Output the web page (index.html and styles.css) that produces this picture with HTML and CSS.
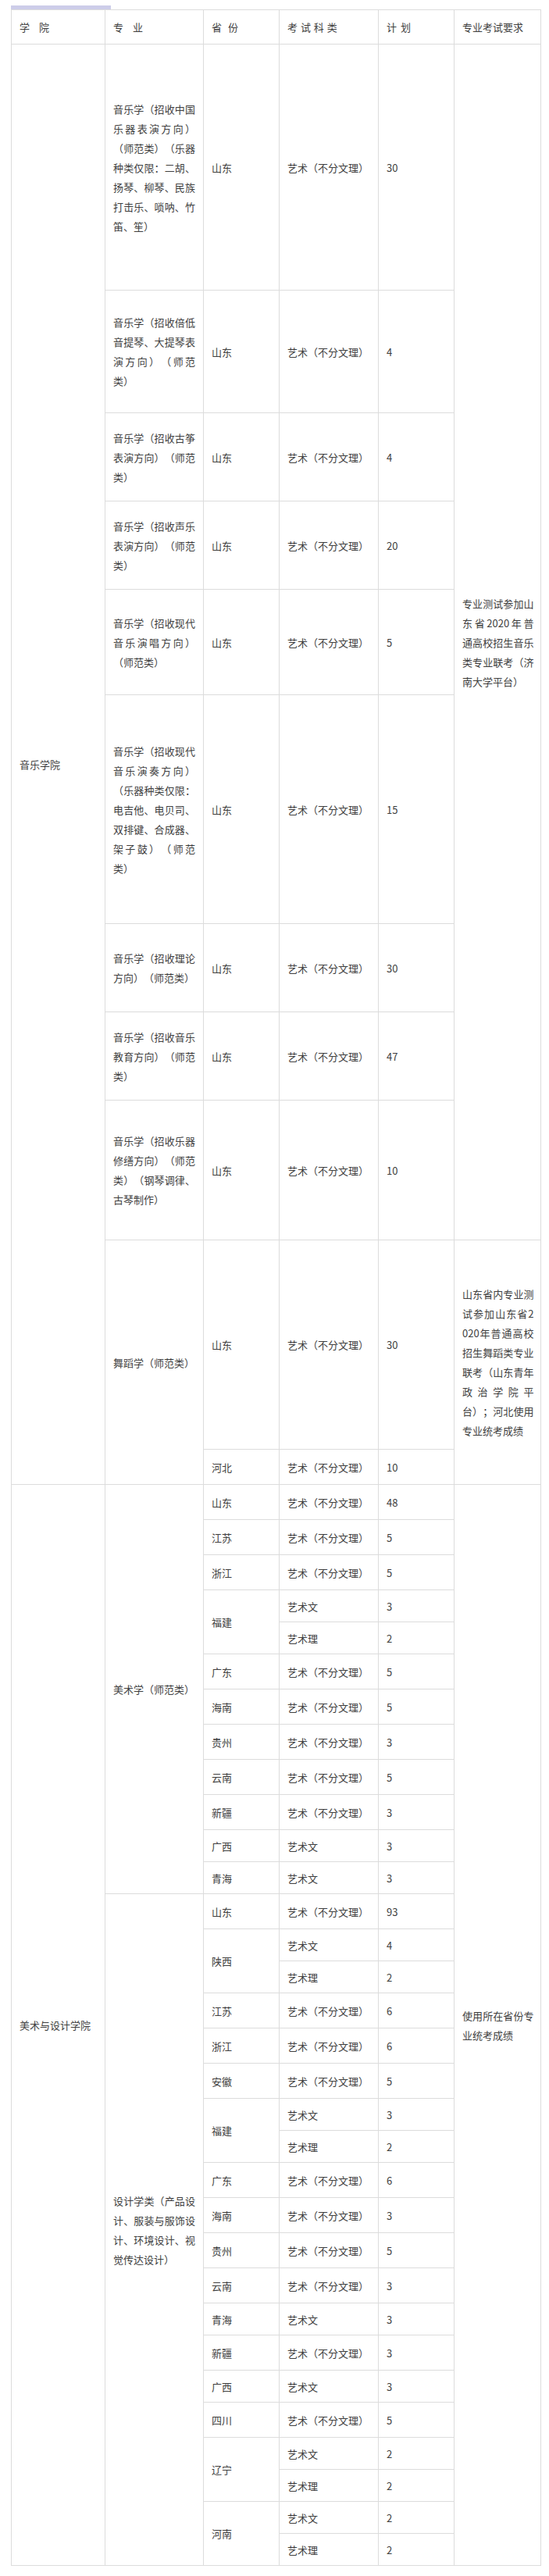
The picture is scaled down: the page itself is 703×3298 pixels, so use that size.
FILE: index.html
```html
<!DOCTYPE html>
<html lang="zh-CN">
<head>
<meta charset="utf-8">
<title>招生计划</title>
<link rel="stylesheet" href="styles.css">
</head>
<body>
<div class="page">
  <div class="bar"></div>
  <table class="plan">
    <colgroup>
      <col class="c-college">
      <col class="c-major">
      <col class="c-prov">
      <col class="c-type">
      <col class="c-num">
      <col class="c-req">
    </colgroup>
    <thead>
      <tr class="h-head">
        <th class="ws-9">学 院</th>
        <th class="ws-9">专 业</th>
        <th class="ws-5">省 份</th>
        <th class="ws-1">考 试 科 类</th>
        <th class="ws-2">计 划</th>
        <th>专业考试要求</th>
      </tr>
    </thead>
    <tbody>
      <tr class="h-315">
        <td rowspan="11">音乐学院</td>
        <td class="major">音乐学（招收中国乐器表演方向）（师范类）（乐器种类仅限：二胡、扬琴、柳琴、民族打击乐、唢呐、竹笛、笙）</td>
        <td>山东</td><td>艺术（不分文理）</td><td>30</td>
        <td class="req" rowspan="9">专业测试参加山东省2020年普通高校招生音乐类专业联考（济南大学平台）</td>
      </tr>
      <tr class="h-157">
        <td class="major">音乐学（招收倍低音提琴、大提琴表演方向）（师范类）</td>
        <td>山东</td><td>艺术（不分文理）</td><td>4</td>
      </tr>
      <tr class="h-113">
        <td class="major">音乐学（招收古筝表演方向）（师范类）</td>
        <td>山东</td><td>艺术（不分文理）</td><td>4</td>
      </tr>
      <tr class="h-113">
        <td class="major">音乐学（招收声乐表演方向）（师范类）</td>
        <td>山东</td><td>艺术（不分文理）</td><td>20</td>
      </tr>
      <tr class="h-135">
        <td class="major">音乐学（招收现代音乐演唱方向）（师范类）</td>
        <td>山东</td><td>艺术（不分文理）</td><td>5</td>
      </tr>
      <tr class="h-293">
        <td class="major">音乐学（招收现代音乐演奏方向）（乐器种类仅限：电吉他、电贝司、双排键、合成器、架子鼓）（师范类）</td>
        <td>山东</td><td>艺术（不分文理）</td><td>15</td>
      </tr>
      <tr class="h-113">
        <td class="major">音乐学（招收理论方向）（师范类）</td>
        <td>山东</td><td>艺术（不分文理）</td><td>30</td>
      </tr>
      <tr class="h-113">
        <td class="major">音乐学（招收音乐教育方向）（师范类）</td>
        <td>山东</td><td>艺术（不分文理）</td><td>47</td>
      </tr>
      <tr class="h-179">
        <td class="major">音乐学（招收乐器修缮方向）（师范类）（钢琴调律、古琴制作）</td>
        <td>山东</td><td>艺术（不分文理）</td><td>10</td>
      </tr>
      <tr class="h-268">
        <td class="major" rowspan="2">舞蹈学（师范类）</td>
        <td>山东</td><td>艺术（不分文理）</td><td>30</td>
        <td class="req" rowspan="2">山东省内专业测试参加山东省2020年普通高校招生舞蹈类专业联考（山东青年政治学院平台）；河北使用专业统考成绩</td>
      </tr>
      <tr class="h-45">
        <td>河北</td><td>艺术（不分文理）</td><td>10</td>
      </tr>

      <tr class="h-45">
        <td rowspan="32">美术与设计学院</td>
        <td class="major" rowspan="12">美术学（师范类）</td>
        <td>山东</td><td>艺术（不分文理）</td><td>48</td>
        <td class="req" rowspan="32">使用所在省份专业统考成绩</td>
      </tr>
      <tr class="h-45"><td>江苏</td><td>艺术（不分文理）</td><td>5</td></tr>
      <tr class="h-45"><td>浙江</td><td>艺术（不分文理）</td><td>5</td></tr>
      <tr class="h-41"><td rowspan="2">福建</td><td>艺术文</td><td>3</td></tr>
      <tr class="h-41"><td>艺术理</td><td>2</td></tr>
      <tr class="h-45"><td>广东</td><td>艺术（不分文理）</td><td>5</td></tr>
      <tr class="h-45"><td>海南</td><td>艺术（不分文理）</td><td>5</td></tr>
      <tr class="h-45"><td>贵州</td><td>艺术（不分文理）</td><td>3</td></tr>
      <tr class="h-45"><td>云南</td><td>艺术（不分文理）</td><td>5</td></tr>
      <tr class="h-45"><td>新疆</td><td>艺术（不分文理）</td><td>3</td></tr>
      <tr class="h-41"><td>广西</td><td>艺术文</td><td>3</td></tr>
      <tr class="h-41"><td>青海</td><td>艺术文</td><td>3</td></tr>

      <tr class="h-45">
        <td class="major" rowspan="20">设计学类（产品设计、服装与服饰设计、环境设计、视觉传达设计）</td>
        <td>山东</td><td>艺术（不分文理）</td><td>93</td>
      </tr>
      <tr class="h-41"><td rowspan="2">陕西</td><td>艺术文</td><td>4</td></tr>
      <tr class="h-41"><td>艺术理</td><td>2</td></tr>
      <tr class="h-45"><td>江苏</td><td>艺术（不分文理）</td><td>6</td></tr>
      <tr class="h-45"><td>浙江</td><td>艺术（不分文理）</td><td>6</td></tr>
      <tr class="h-45"><td>安徽</td><td>艺术（不分文理）</td><td>5</td></tr>
      <tr class="h-41"><td rowspan="2">福建</td><td>艺术文</td><td>3</td></tr>
      <tr class="h-41"><td>艺术理</td><td>2</td></tr>
      <tr class="h-45"><td>广东</td><td>艺术（不分文理）</td><td>6</td></tr>
      <tr class="h-45"><td>海南</td><td>艺术（不分文理）</td><td>3</td></tr>
      <tr class="h-45"><td>贵州</td><td>艺术（不分文理）</td><td>5</td></tr>
      <tr class="h-45"><td>云南</td><td>艺术（不分文理）</td><td>3</td></tr>
      <tr class="h-41"><td>青海</td><td>艺术文</td><td>3</td></tr>
      <tr class="h-45"><td>新疆</td><td>艺术（不分文理）</td><td>3</td></tr>
      <tr class="h-41"><td>广西</td><td>艺术文</td><td>3</td></tr>
      <tr class="h-45"><td>四川</td><td>艺术（不分文理）</td><td>5</td></tr>
      <tr class="h-41"><td rowspan="2">辽宁</td><td>艺术文</td><td>2</td></tr>
      <tr class="h-41"><td>艺术理</td><td>2</td></tr>
      <tr class="h-41"><td rowspan="2">河南</td><td>艺术文</td><td>2</td></tr>
      <tr class="h-41"><td>艺术理</td><td>2</td></tr>
    </tbody>
  </table>
</div>
</body>
</html>
```

FILE: styles.css
```css
html, body {
  margin: 0;
  padding: 0;
  background: #ffffff;
}

body {
  font-family: "Noto Sans CJK SC", "Noto Sans", sans-serif;
  font-size: 13px;
  color: #3e3e3e;
}

.page {
  padding: 7px 0 0 14px;
}

.bar {
  width: 128px;
  height: 5px;
  background: #cdcde9;
}

.plan {
  border-collapse: collapse;
  table-layout: fixed;
  width: 678px;
}

.c-college { width: 120px; }
.c-major   { width: 126px; }
.c-prov    { width: 97px; }
.c-type    { width: 127px; }
.c-num     { width: 97px; }
.c-req     { width: 111px; }

.plan th,
.plan td {
  border: 1px solid #dcdcdc;
  padding: 0 10px;
  line-height: 25px;
  vertical-align: middle;
  text-align: left;
  font-weight: normal;
  word-break: break-all;
  text-spacing-trim: space-all;
}

.plan .major,
.plan .req {
  text-align: justify;
}

.plan .req {
  padding-right: 8.5px;
}

.ws-9 { word-spacing: 9px; }
.ws-5 { word-spacing: 5px; }
.ws-2 { word-spacing: 2px; }
.ws-1 { word-spacing: 1px; }

.h-head { height: 44px; }
.h-315 { height: 315px; }
.h-293 { height: 293px; }
.h-268 { height: 268px; }
.h-179 { height: 179px; }
.h-157 { height: 157px; }
.h-135 { height: 135px; }
.h-113 { height: 113px; }
.h-45  { height: 45px; }
.h-41  { height: 41px; }
```
